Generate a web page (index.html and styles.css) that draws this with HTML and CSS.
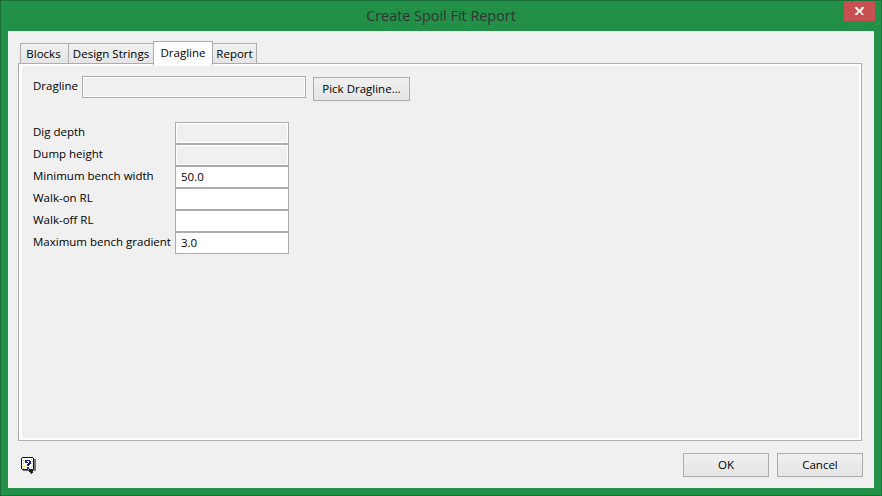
FILE: index.html
```html
<!DOCTYPE html>
<html lang="en">
<head>
<meta charset="utf-8">
<title>Create Spoil Fit Report</title>
<link rel="stylesheet" href="styles.css">
</head>
<body>
<div class="window">
  <header class="titlebar">
    <div class="title">Create Spoil Fit Report</div>
    <div class="close"><svg width="11" height="9" viewBox="0 0 11 9"><path d="M1 0h2l2.500 3 2.500-3h2v1l-3 3.500 3 3.500h-2l-2.500-3-2.500 3h-2v-1l3-2.500-3-3.500z" fill="#fff"/></svg></div>
  </header>
  <main class="client">
    <nav class="tabs">
      <div class="tab tab-blocks">Blocks</div>
      <div class="tab tab-strings">Design Strings</div>
      <div class="tab tab-active">Dragline</div>
      <div class="tab tab-report">Report</div>
    </nav>
    <section class="pane">
      <div class="pick-row">
        <span class="pick-label">Dragline</span>
        <div class="field field-pick"></div>
        <div class="btn btn-pick">Pick Dragline...</div>
      </div>
      <div class="form">
        <div class="row"><span class="label">Dig depth</span><div class="field field-num"></div></div>
        <div class="row"><span class="label">Dump height</span><div class="field field-num"></div></div>
        <div class="row"><span class="label">Minimum bench width</span><div class="field field-num field-on">50.0</div></div>
        <div class="row"><span class="label">Walk-on RL</span><div class="field field-num field-on"></div></div>
        <div class="row"><span class="label">Walk-off RL</span><div class="field field-num field-on"></div></div>
        <div class="row"><span class="label">Maximum bench gradient</span><div class="field field-num field-on">3.0</div></div>
      </div>
    </section>
    <footer class="footer">
      <svg class="help" width="16" height="17" viewBox="0 0 16 17" shape-rendering="crispEdges">
        <path d="M2 2h13v12H2z" fill="#777"/>
        <path d="M9 13h3v3h-1v1h-1v-1H9z" fill="#222"/>
        <path d="M1 0h11v1h1v11h-1v1H9v2H8v-1H7v-1H1v-1H0V1h1z" fill="#111"/>
        <path d="M1 1h11v11H8v1H7v-1H1z" fill="#fffff4"/>
        <path d="M10 2h1v1h-1zM11 4h1v1h-1zM10 6h1v1h-1zM11 8h1v1h-1zM10 10h1v1h-1zM8 11h1v1H8zM6 10h1v1H6zM3 9h1v1H3zM2 11h1v1H2zM2 3h1v1H2zM2 6h1v1H2z" fill="#e3d400"/>
        <path d="M4 3h5v1h1v3H9v1H8v1H6V7h1V6h1V4H6v1H7v1H4V4h0zM6 10h2v2H6z" fill="#1c1c9c"/>
      </svg>
      <div class="actions">
        <div class="btn btn-action">OK</div>
        <div class="btn btn-action">Cancel</div>
      </div>
    </footer>
  </main>
</div>
</body>
</html>
```
FILE: styles.css
```css
* { box-sizing: border-box; }
html, body { margin: 0; padding: 0; }
body {
  width: 882px;
  height: 496px;
  overflow: hidden;
  font-family: "Open Sans", "Noto Sans", sans-serif;
  font-size: 11.5px;
  color: #000;
}
.window {
  width: 882px;
  height: 496px;
  background: #239048;
  border: 1px solid #1b6f3a;
  display: flex;
  flex-direction: column;
}
.titlebar {
  height: 30px;
  flex: none;
  display: flex;
  justify-content: space-between;
  position: relative;
}
.title {
  position: absolute;
  left: 0;
  right: 0;
  top: 5px;
  text-align: center;
  font-size: 14.4px;
  line-height: 20px;
  color: #333;
}
.close {
  position: absolute;
  left: 843px;
  top: 0;
  width: 31px;
  height: 20px;
  background: #c75050;
  display: flex;
  align-items: center;
  justify-content: center;
}
.client {
  flex: 1;
  margin: 0 7px 7px;
  background: #f0f0f0;
  padding: 10px 12px 0 10px;
  display: flex;
  flex-direction: column;
}
.tabs {
  display: flex;
  align-items: flex-end;
  height: 24px;
  margin-left: 2px;
  position: relative;
  z-index: 1;
  margin-bottom: -2px;
}
.tab {
  height: 20px;
  margin-bottom: 2px;
  border: 1px solid #acacac;
  border-bottom: 0;
  background: linear-gradient(#f0f0f0, #e5e5e5);
  text-align: center;
  line-height: 20px;
  margin-right: -1px;
}
.tab-blocks { width: 49px; padding-right: 2px; }
.tab-strings { width: 86px; }
.tab-report { width: 45px; }
.tab-active {
  width: 60px;
  height: 24px;
  margin-bottom: 0;
  background: #fff;
  line-height: 21px;
  position: relative;
  z-index: 1;
}
.pane {
  height: 378px;
  border: 1px solid #acacac;
  background: #f0f0f0;
  box-shadow: inset 3px 0 0 #fff, inset 0 0 0 2px #fff;
  padding: 12px 14px;
}
.pick-row {
  display: flex;
  align-items: flex-start;
  height: 46px;
}
.pick-label {
  width: 49px;
  line-height: 20px;
}
.field {
  border: 1px solid #acacac;
  background: #f0f0f0;
  box-shadow: inset 0 0 0 1px #fff;
  line-height: 20px;
  padding-left: 5px;
}
.field-pick {
  width: 224px;
  height: 22px;
  margin-right: 7px;
}
.btn {
  border: 1px solid #acacac;
  background: linear-gradient(#f0f0f0, #e5e5e5);
  text-align: center;
  line-height: 22px;
}
.btn-pick {
  width: 97px;
  height: 24px;
  margin-top: 1px;
}
.row {
  display: flex;
  align-items: flex-start;
  height: 22px;
}
.label {
  width: 142px;
  line-height: 20px;
  white-space: nowrap;
}
.field-num {
  width: 114px;
  height: 22px;
}
.field-on { background: #fff; }
.footer {
  flex: 1;
  display: flex;
  justify-content: space-between;
  align-items: flex-start;
  padding: 12px 0 0 3px;
  margin-right: -1px;
}
.help { margin-top: 4px; }
.actions {
  display: flex;
  gap: 8px;
}
.btn-action {
  width: 86px;
  height: 24px;
}
```
